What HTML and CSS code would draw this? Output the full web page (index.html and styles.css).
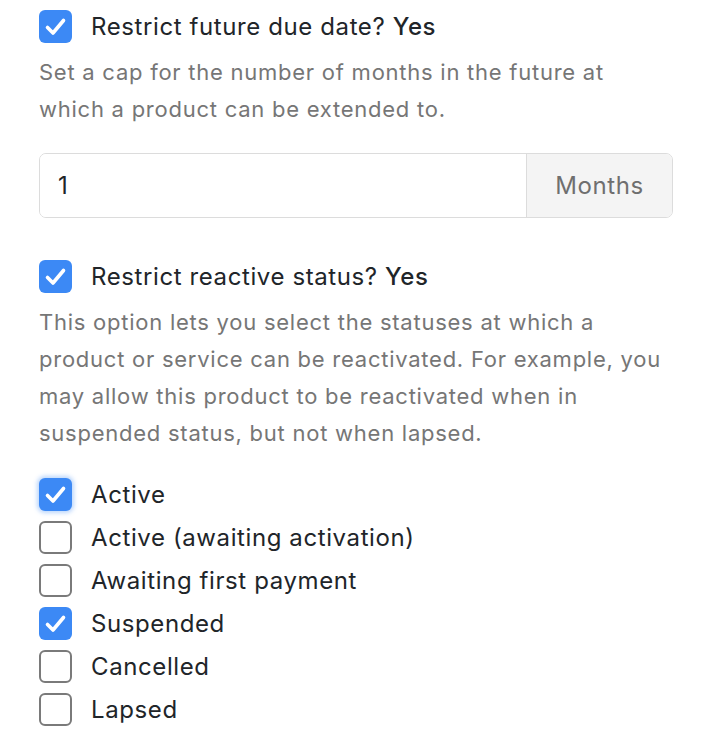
FILE: index.html
```html
<!DOCTYPE html>
<html lang="en">
<head>
    <meta charset="UTF-8">
    <meta name="viewport" content="width=device-width, initial-scale=1.0">
    <title>Product Settings</title>
    <link rel="stylesheet" href="styles.css">
</head>
<body>

    <div class="settings">
        <!-- Future due date -->
        <label class="check-row">
            <span class="box checked">
                <svg viewBox="0 0 33 33"><path d="M8.5 17.5 L14 23 L24.5 10.5"/></svg>
            </span>
            <span class="check-label">Restrict future due date? <strong>Yes</strong></span>
        </label>
        <p class="help">Set a cap for the number of months in the future at which a product can be extended to.</p>

        <div class="input-group">
            <input type="text" class="field" value="1">
            <span class="addon">Months</span>
        </div>

        <!-- Reactive status -->
        <label class="check-row section">
            <span class="box checked">
                <svg viewBox="0 0 33 33"><path d="M8.5 17.5 L14 23 L24.5 10.5"/></svg>
            </span>
            <span class="check-label">Restrict reactive status? <strong>Yes</strong></span>
        </label>
        <p class="help">This option lets you select the statuses at which a product or service can be reactivated. For example, you may allow this product to be reactivated when in suspended status, but not when lapsed.</p>

        <div class="status-list">
            <label class="check-row">
                <span class="box checked focus">
                    <svg viewBox="0 0 33 33"><path d="M8.5 17.5 L14 23 L24.5 10.5"/></svg>
                </span>
                <span class="check-label">Active</span>
            </label>
            <label class="check-row">
                <span class="box"></span>
                <span class="check-label">Active (awaiting activation)</span>
            </label>
            <label class="check-row">
                <span class="box"></span>
                <span class="check-label">Awaiting first payment</span>
            </label>
            <label class="check-row">
                <span class="box checked">
                    <svg viewBox="0 0 33 33"><path d="M8.5 17.5 L14 23 L24.5 10.5"/></svg>
                </span>
                <span class="check-label">Suspended</span>
            </label>
            <label class="check-row">
                <span class="box"></span>
                <span class="check-label">Cancelled</span>
            </label>
            <label class="check-row">
                <span class="box"></span>
                <span class="check-label">Lapsed</span>
            </label>
        </div>
    </div>

</body>
</html>
```

FILE: styles.css
```css
/* General Styles */
body {
    font-family: 'Inter', 'Liberation Sans', sans-serif;
    margin: 0;
    padding: 0;
    background: #fff;
    color: #212529;
    letter-spacing: 0.6px;
}

.settings {
    display: flex;
    flex-direction: column;
    width: 634px;
    padding: 5px 39px 0;
}

/* Checkbox rows */
.check-row {
    display: flex;
    align-items: center;
    height: 43px;
    gap: 19px;
    font-size: 24px;
}

.check-row.section {
    margin-top: 37px;
}

.check-label strong {
    font-weight: 500;
}

.box {
    flex: none;
    width: 33px;
    height: 33px;
    box-sizing: border-box;
    border: 2.5px solid #7a7a7a;
    border-radius: 6px;
    background: #fff;
}

.box.checked {
    border: none;
    background: #3c89f5;
}

.box.focus {
    box-shadow: 0 0 4px 2px rgba(60, 137, 245, 0.35);
}

.box svg {
    display: block;
    width: 33px;
    height: 33px;
    fill: none;
    stroke: #fff;
    stroke-width: 3.6;
    stroke-linecap: round;
    stroke-linejoin: round;
}

/* Help text */
.help {
    margin: 5.5px 0 0;
    font-size: 22px;
    line-height: 37px;
    letter-spacing: 0.75px;
    color: #767676;
}

/* Input with addon */
.input-group {
    display: flex;
    height: 65px;
    margin-top: 25.5px;
    border: 1.5px solid #dcdcdc;
    border-radius: 7px;
    box-sizing: border-box;
    overflow: hidden;
}

.input-group .field {
    flex: 1;
    min-width: 0;
    border: none;
    padding: 0 18px;
    font-family: inherit;
    font-size: 24px;
    letter-spacing: inherit;
    color: #212529;
    outline: none;
}

.input-group .addon {
    display: flex;
    align-items: center;
    justify-content: center;
    width: 145px;
    border-left: 1.5px solid #dcdcdc;
    background: #f4f4f4;
    font-size: 24px;
    color: #6f6f6f;
}

.status-list {
    display: flex;
    flex-direction: column;
    margin-top: 21px;
}
```
